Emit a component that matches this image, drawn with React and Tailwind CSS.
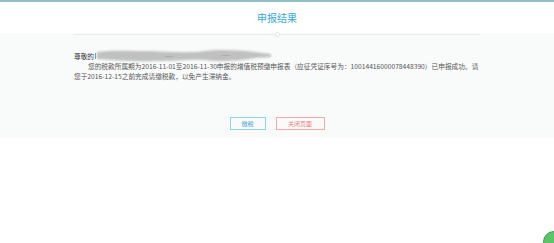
export default function App() {
  return (
    <div
      className="relative w-full h-[243px] bg-white border-t-2 border-[#8cc0c4] overflow-hidden"
      style={{ fontFamily: '"Noto Sans CJK SC", "Liberation Sans", sans-serif' }}
    >
      <div className="h-[31px] flex items-center justify-center">
        <h1 className="text-[10px] leading-none text-[#35a8d6]">申报结果</h1>
      </div>

      <div className="bg-[#f9fbfb] pt-[1px] pb-[8px]">
        <div className="mx-auto w-[406px] flex items-center h-px">
          <div className="flex-1 h-px bg-[#e6ecec]" />
          <span className="w-[5px] h-[5px] rounded-full bg-white border border-[#dde4e4]" />
          <div className="flex-1 h-px bg-[#e6ecec]" />
        </div>

        <div className="mx-auto w-[406px] mt-[16px] text-[6.7px] leading-[10px] text-[#555]">
          <div className="flex items-center h-[10px]">
            <span className="text-[#333]">尊敬的</span>
            <span className="w-px h-[6px] bg-[#4aa3d0] ml-[1px]" />
            <svg width="182" height="16" viewBox="0 0 182 16" className="-ml-[1px]">
              <defs>
                <filter id="smear" x="-10%" y="-50%" width="120%" height="200%">
                  <feGaussianBlur stdDeviation="1.2" />
                </filter>
              </defs>
              <g filter="url(#smear)" fill="#c0c0c0">
                <path d="M2 4 C15 2 35 3 55 3 C75 4 95 5 110 3 C125 1 145 2 160 4 L176 6 L176 9 L160 10 C145 13 125 14 110 12 C95 11 80 13 60 13 C40 14 20 12 2 11 Z" />
              </g>
              <g fill="#9a9a9a" opacity="0.5">
                <rect x="70" y="8" width="8" height="1" />
                <rect x="127" y="7" width="8" height="1" />
              </g>
            </svg>
          </div>
          <p className="whitespace-nowrap">
            <span className="pl-[14px]">
              您的税款所属期为2016-11-01至2016-11-30申报的增值税预缴申报表（应征凭证序号为：10014416000078448390）已申报成功。请
            </span>
            <br />
            您于2016-12-15之前完成请缴税款，以免产生滞纳金。
          </p>
        </div>

        <div className="mt-[36px] flex justify-center gap-[10px]">
          <button className="w-[36px] h-[13px] border border-[#8fd3e8] text-[6px] leading-none text-[#4aa3d0] bg-transparent">
            缴税
          </button>
          <button className="w-[49px] h-[13px] border border-[#f3a9a9] text-[6px] leading-none text-[#f07f7f] bg-transparent">
            关闭页面
          </button>
        </div>
      </div>

      <div className="absolute -right-[11px] -bottom-[10px] w-[22px] h-[22px] rounded-full bg-[#5cc46a] border border-[#3fa04d]" />
    </div>
  );
}
